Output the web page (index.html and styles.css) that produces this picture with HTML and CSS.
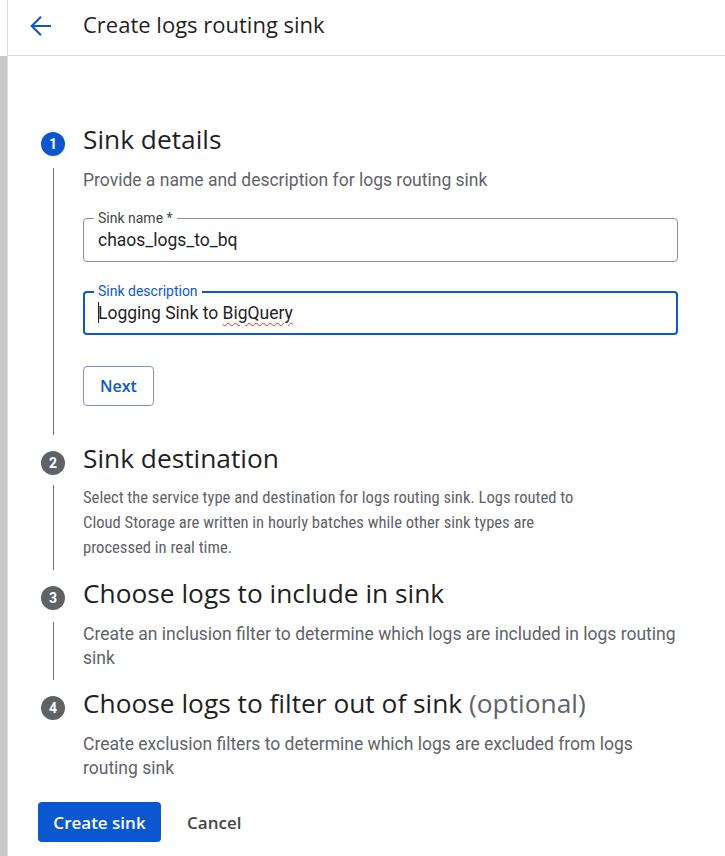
FILE: index.html
```html
<!DOCTYPE html>
<html lang="en">
<head>
<meta charset="utf-8">
<title>Create logs routing sink</title>
<link rel="stylesheet" href="styles.css">
</head>
<body>
<div class="page">
  <div class="strip"></div>
  <div class="main">
    <header class="topbar">
      <svg class="back" width="22" height="22" viewBox="0 0 22 22" aria-hidden="true"><path d="M21 11H2.5M11 1.7L1.7 11L11 20.3" fill="none" stroke="#0b57d0" stroke-width="2.1"/></svg>
      <h1 class="page-title">Create logs routing sink</h1>
    </header>
    <div class="content">
      <section class="step">
        <div class="badge active">1</div>
        <h2 class="step-title">Sink details</h2>
        <div class="rail"></div>
        <div class="step-body body-1">
          <p class="desc">Provide a name and description for logs routing sink</p>
          <div class="field">
            <span class="field-label">Sink name *</span>
            <div class="field-value">chaos_logs_to_bq</div>
          </div>
          <div class="field focused">
            <span class="field-label">Sink description</span>
            <div class="field-value"><span class="caret"></span>Logging Sink to <span class="spell">BigQuery</span></div>
          </div>
          <button class="btn-outline">Next</button>
        </div>
      </section>
      <section class="step step-2">
        <div class="badge">2</div>
        <h2 class="step-title">Sink destination</h2>
        <div class="rail"></div>
        <div class="step-body">
          <p class="desc desc-narrow">Select the service type and destination for logs routing sink. Logs routed to<br>Cloud Storage are written in hourly batches while other sink types are<br>processed in real time.</p>
        </div>
      </section>
      <section class="step">
        <div class="badge">3</div>
        <h2 class="step-title">Choose logs to include in sink</h2>
        <div class="rail"></div>
        <div class="step-body">
          <p class="desc">Create an inclusion filter to determine which logs are included in logs routing sink</p>
        </div>
      </section>
      <section class="step last">
        <div class="badge">4</div>
        <h2 class="step-title">Choose logs to filter out of sink <span class="optional">(optional)</span></h2>
        <div class="rail-empty"></div>
        <div class="step-body">
          <p class="desc">Create exclusion filters to determine which logs are excluded from logs routing sink</p>
        </div>
      </section>
    </div>
    <div class="actions">
      <button class="btn-primary">Create sink</button>
      <button class="btn-text">Cancel</button>
    </div>
  </div>
</div>
</body>
</html>
```
FILE: styles.css
```css
* { box-sizing: border-box; }
html, body { margin: 0; padding: 0; background: #fff; }
body { font-family: Roboto, "Noto Sans", sans-serif; color: #1f1f1f; }

.page {
  display: flex;
  min-height: 856px;
}
.strip {
  width: 8px;
  flex: none;
  border-right: 1px solid #dadce0;
  background: linear-gradient(to bottom, #fff 0, #fff 56px, #c9c9c9 56px, #c9c9c9 100%);
}
.main {
  flex: 1;
  min-width: 0;
}
.topbar {
  height: 56px;
  border-bottom: 1px solid #dadce0;
  display: flex;
  align-items: center;
  padding-left: 22px;
  padding-bottom: 4px;
}
.back { flex: none; width: 22px; height: 22px; }
.page-title {
  margin: 0 0 0 31px;
  padding-bottom: 4px;
  font-family: "Open Sans", sans-serif;
  font-weight: 400;
  font-size: 22px;
  line-height: 28px;
  color: #1f1f1f;
}

.content {
  padding: 72px 47px 0 30px;
}
.step {
  display: grid;
  grid-template-columns: 30px 1fr;
  column-gap: 15px;
  row-gap: 8px;
  margin-bottom: 12px;
}
.step-2 { row-gap: 6px; }
.badge {
  width: 24px;
  height: 24px;
  border-radius: 50%;
  background: #5f6368;
  color: #fff;
  font-size: 14px;
  font-weight: 700;
  display: flex;
  align-items: center;
  justify-content: center;
  align-self: center;
  justify-self: center;
}
.badge.active { background: #0b57d0; }
.step-title {
  margin: 0;
  font-family: "Open Sans", sans-serif;
  font-weight: 400;
  font-size: 26.3px;
  line-height: 22px;
  padding-bottom: 10px;
  color: #1f1f1f;
  white-space: nowrap;
}
.optional { color: #5f6368; }
.rail {
  width: 1px;
  background: #747775;
  justify-self: center;
}
.step-body {
  padding-bottom: 10px;
}
.body-1 { padding-bottom: 29px; }
.desc {
  margin: 0;
  font-size: 17.5px;
  line-height: 24px;
  color: #5f6368;
}
.desc-narrow {
  font-family: "Roboto Condensed", Roboto, sans-serif;
  font-size: 16.6px;
  line-height: 25px;
  white-space: nowrap;
}

.field {
  position: relative;
  height: 44px;
  border: 1px solid #8e918f;
  border-radius: 4px;
  margin-top: 26px;
  display: flex;
  align-items: center;
}
.field + .field { margin-top: 29px; }
.field.focused {
  border: 2px solid #0b57d0;
}
.field-label {
  position: absolute;
  top: -9px;
  left: 10px;
  padding: 0 4px;
  background: #fff;
  font-size: 14px;
  line-height: 16px;
  color: #444746;
}
.focused .field-label { color: #0b57d0; left: 9px; top: -10px; }
.field-value {
  padding-left: 14px;
  font-size: 17.5px;
  color: #1f1f1f;
  line-height: 24px;
}
.focused .field-value { padding-left: 13px; }
.caret {
  display: inline-block;
  width: 1px;
  height: 21px;
  background: #1f1f1f;
  vertical-align: -4px;
  margin-right: -1px;
}
.spell {
  text-decoration: underline wavy #d93025;
  text-decoration-thickness: 1px;
  text-underline-offset: 3px;
}
.btn-outline {
  margin-top: 31px;
  height: 40px;
  width: 71px;
  border: 1px solid #7a95c9;
  border-radius: 4px;
  background: #fff;
  color: #0b57d0;
  font-family: "Open Sans", sans-serif;
  font-size: 16px;
  font-weight: 600;
  padding: 0;
}

.actions {
  display: flex;
  align-items: center;
  gap: 26px;
  padding-left: 30px;
  margin-top: 8px;
}
.btn-primary {
  height: 40px;
  width: 123px;
  border: 0;
  border-radius: 4px;
  background: #0b57d0;
  color: #fff;
  font-family: "Open Sans", sans-serif;
  font-size: 17px;
  font-weight: 600;
  padding: 0;
}
.btn-text {
  border: 0;
  background: none;
  padding: 0;
  color: #444746;
  font-family: "Open Sans", sans-serif;
  font-size: 17px;
  font-weight: 600;
}
```
